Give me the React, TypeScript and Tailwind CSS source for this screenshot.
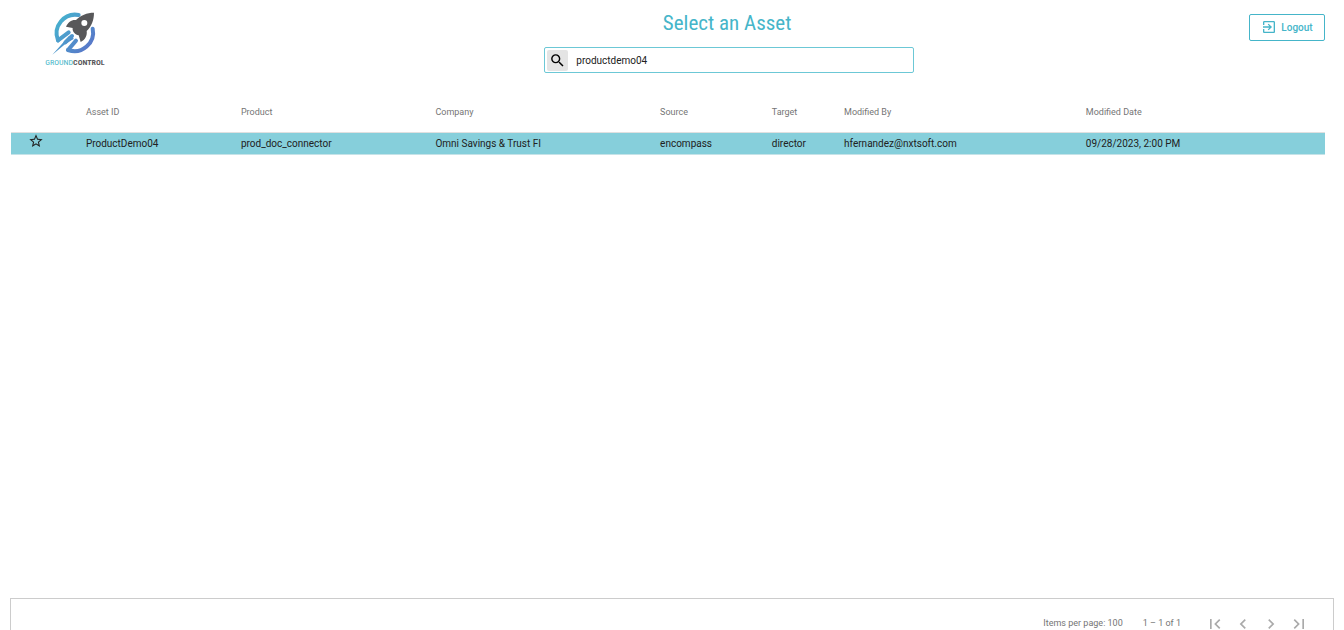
import { useState } from "react";

const COLUMNS = [
  { label: "Asset ID", width: "w-[11.8%]" },
  { label: "Product", width: "w-[14.8%]" },
  { label: "Company", width: "w-[17.1%]" },
  { label: "Source", width: "w-[8.5%]" },
  { label: "Target", width: "w-[5.5%]" },
  { label: "Modified By", width: "w-[18.4%]" },
  { label: "Modified Date", width: "" },
];

const ASSETS = [
  {
    id: "ProductDemo04",
    product: "prod_doc_connector",
    company: "Omni Savings & Trust FI",
    source: "encompass",
    target: "director",
    modifiedBy: "hfernandez@nxtsoft.com",
    modifiedDate: "09/28/2023, 2:00 PM",
  },
];

const PAGER = [
  { label: "First page", path: "M18.41 16.59L13.82 12l4.59-4.59L17 6l-6 6 6 6zM6 6h2v12H6z" },
  { label: "Previous page", path: "M15.41 7.41L14 6l-6 6 6 6 1.41-1.41L10.83 12z" },
  { label: "Next page", path: "M10 6L8.59 7.41 13.17 12l-4.58 4.59L10 18l6-6z" },
  { label: "Last page", path: "M5.59 7.41L10.18 12l-4.59 4.59L7 18l6-6-6-6zM16 6h2v12h-2z" },
];

const Icon = ({ path, className }: { path: string; className: string }) => (
  <svg viewBox="0 0 24 24" fill="currentColor" className={className} aria-hidden="true">
    <path d={path} />
  </svg>
);

//rocket inside the broken ring with the product name below
const Logo = () => (
  <div className="flex w-16 flex-col items-center">
    <svg viewBox="0 0 150 150" className="size-[50px]" aria-hidden="true">
      <defs>
        <linearGradient id="ring" gradientUnits="userSpaceOnUse" x1="15" y1="30" x2="130" y2="125">
          <stop offset="0" stopColor="#45b5cf" />
          <stop offset="1" stopColor="#5a72c8" />
        </linearGradient>
      </defs>
      <g fill="none" stroke="url(#ring)" strokeWidth="12" strokeLinecap="round">
        <path d="M86 21A56 56 0 0 0 24 97" />
        <path d="M128 62A56 56 0 0 1 54 126" />
        <path d="M24 97L56 73" />
        <path d="M54 126L78 98" />
        <path d="M66 84L46 103" />
      </g>
      <path d="M57 84L72 92L46 108L7 140Z" fill="url(#ring)" />
      <path
        d="M132 14C111 14 91 22 78 36C66 34 54 42 48 56L68 60C66 70 76 81 86 82L92 102C106 95 112 82 110 69C125 54 132 36 132 14Z"
        fill="#58585a"
      />
      <circle cx="103" cy="45" r="9" fill="#fff" />
    </svg>
    <div className="font-['Roboto_Condensed','Roboto',sans-serif] text-[8px] leading-[10px] text-[#45b5c9]">
      GROUND<span className="font-bold text-[#58585a]">CONTROL</span>
    </div>
  </div>
);

const App = () => {
  const [search, setSearch] = useState("productdemo04");

  return (
    <div className="flex h-screen flex-col overflow-hidden bg-white font-['Roboto',sans-serif] text-[10px] text-[#212121]">
      <header className="flex h-[91px] shrink-0 items-start">
        <div className="w-[40.5%] pt-2 pl-[43px]">
          <Logo />
        </div>

        <div className="w-[27.5%] pt-2">
          <h1 className="pr-1 text-center font-['Roboto_Condensed','Roboto',sans-serif] text-[21px] leading-[30px] text-[#45b5c9]">
            Select an Asset
          </h1>
          <div className="mt-[9px] flex h-[26px] items-center rounded-xs border border-[#6cc8d6] px-0.5">
            <button
              type="button"
              aria-label="Search"
              className="flex size-[21px] items-center justify-center rounded-xs bg-[#e4e4e4]"
            >
              <Icon
                className="size-[17px] text-black"
                path="M15.5 14h-.79l-.28-.27A6.471 6.471 0 0 0 16 9.5 6.5 6.5 0 1 0 9.5 16c1.61 0 3.09-.59 4.23-1.57l.27.28v.79l5 4.99L20.49 19l-4.99-5zm-6 0C7.01 14 5 11.99 5 9.5S7.01 5 9.5 5 14 7.01 14 9.5 11.99 14 9.5 14z"
              />
            </button>
            <input
              type="text"
              aria-label="Search assets"
              value={search}
              onChange={(e) => setSearch(e.target.value)}
              className="h-full min-w-0 flex-1 px-2 pt-px text-[10px] outline-none"
            />
          </div>
        </div>

        <div className="flex flex-1 justify-end pt-3.5 pr-[19px]">
          <button
            type="button"
            className="flex h-[27px] w-[76px] items-center justify-center gap-1 rounded-xs border border-[#45b5c9] pb-px text-[10px] font-medium text-[#45b5c9]"
          >
            <Icon
              className="size-4"
              path="M10.09 15.59L11.5 17l5-5-5-5-1.41 1.41L12.67 11H3v2h9.67l-2.58 2.59zM19 3H5c-1.11 0-2 .9-2 2v4h2V5h14v14H5v-4H3v4c0 1.1.89 2 2 2h14c1.1 0 2-.9 2-2V5c0-1.1-.9-2-2-2z"
            />
            Logout
          </button>
        </div>
      </header>

      <main className="min-h-0 flex-1 pr-[19px] pl-[11px]">
        <table className="w-full table-fixed text-left">
          <thead>
            <tr className="h-[41px] border-b border-[#e0e0e0] text-[9px] text-[#757575]">
              <th className="w-[5.7%]" aria-label="Favorite"></th>
              {COLUMNS.map((column) => (
                <th key={column.label} className={`pt-0.5 font-normal ${column.width}`}>
                  {column.label}
                </th>
              ))}
            </tr>
          </thead>
          <tbody>
            {ASSETS.map((asset) => (
              <tr key={asset.id} className="h-[22px] border-b border-[#c5e3e8] bg-[#86cfdb]">
                <td className="pb-1 pl-[17px]">
                  <button type="button" aria-label="Add to favorites" className="block">
                    <Icon
                      className="size-4"
                      path="M22 9.24l-7.19-.62L12 2 9.19 8.63 2 9.24l5.46 4.73L5.82 21 12 17.27 18.18 21l-1.63-7.03L22 9.24zM12 15.4l-3.76 2.27 1-4.28-3.32-2.88 4.38-.38L12 6.1l1.71 4.04 4.38.38-3.32 2.88 1 4.28L12 15.4z"
                    />
                  </button>
                </td>
                <td>{asset.id}</td>
                <td>{asset.product}</td>
                <td>{asset.company}</td>
                <td>{asset.source}</td>
                <td>{asset.target}</td>
                <td>{asset.modifiedBy}</td>
                <td>{asset.modifiedDate}</td>
              </tr>
            ))}
          </tbody>
        </table>
      </main>

      <footer className="mr-[10px] ml-[10px] h-8 shrink-0 border border-b-0 border-[#cccccc]">
        <div className="flex h-[50px] items-center justify-end pr-5 text-[9px] text-[#757575]">
          <span>Items per page: 100</span>
          <span className="ml-5">1 – 1 of 1</span>
          <div className="ml-5 flex text-[#aaaaaa]">
            {PAGER.map((button) => (
              <button
                key={button.label}
                type="button"
                aria-label={button.label}
                disabled
                className="flex w-7 justify-center"
              >
                <Icon path={button.path} className="size-5" />
              </button>
            ))}
          </div>
        </div>
      </footer>
    </div>
  );
};

export default App;
